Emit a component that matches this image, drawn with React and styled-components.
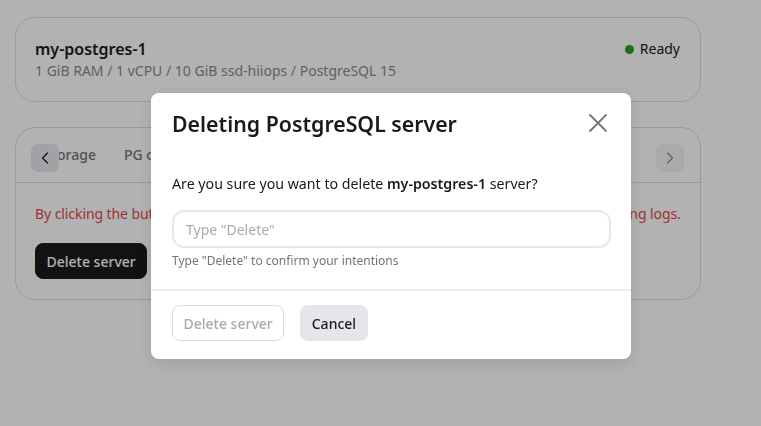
import React from "react";
import styled, { createGlobalStyle } from "styled-components";

const Global = createGlobalStyle`
  * { box-sizing: border-box; }
  html, body { margin: 0; padding: 0; background: #ffffff; }
  body { font-family: "Noto Sans", "Open Sans", sans-serif; color: #1a1a1a; }
`;

const Page = styled.div`
  width: 761px;
  height: 426px;
  padding: 17px 60px 0 15px;
  display: flex;
  flex-direction: column;
  gap: 25px;
  overflow: hidden;
`;

const Card = styled.section`
  border: 1px solid #dedee2;
  border-radius: 20px;
  background: #fff;
  overflow: hidden;
`;

const ServerCard = styled(Card)`
  padding: 20px 20px 20px 19px;
  display: flex;
  justify-content: space-between;
  align-items: flex-start;
`;

const Info = styled.div`
  display: flex;
  flex-direction: column;
  gap: 1px;
`;

const ServerName = styled.div`
  font-size: 16px;
  line-height: 22px;
  font-weight: 600;
  color: #1a1a1a;
`;

const Specs = styled.div`
  font-size: 14px;
  line-height: 20px;
  color: #8a8a92;
`;

const Status = styled.div`
  display: flex;
  align-items: center;
  gap: 6px;
  font-size: 14px;
  line-height: 22px;
  color: #1a1a1a;
`;

const Dot = styled.span`
  width: 9px;
  height: 9px;
  border-radius: 50%;
  background: #23a31f;
`;

const TabsBar = styled.div`
  position: relative;
  height: 55px;
  border-bottom: 1px solid #dedee2;
  display: flex;
  align-items: center;
  padding-left: 28px;
  overflow: hidden;
`;

const Tab = styled.div`
  font-size: 14px;
  line-height: 20px;
  font-weight: 500;
  color: #74747e;
  white-space: nowrap;
  margin-right: 28px;
`;

const ArrowButton = styled.div`
  position: absolute;
  top: 16px;
  ${(p) => (p.$side === "left" ? "left: 15px;" : "right: 16px;")}
  width: 28px;
  height: 28px;
  border-radius: 7px;
  background: ${(p) => (p.$active ? "#e9e9ee" : "#f4f4f7")};
  color: ${(p) => (p.$active ? "#222" : "#8c8c94")};
  display: flex;
  align-items: center;
  justify-content: center;
`;

const CardBody = styled.div`
  padding: 21px 20px 20px 19px;
  display: flex;
  flex-direction: column;
  align-items: flex-start;
  gap: 19px;
`;

const Warning = styled.div`
  font-size: 14px;
  line-height: 20px;
  letter-spacing: -0.08px;
  color: #e24848;
  white-space: nowrap;
`;

const Button = styled.button`
  font-family: inherit;
  font-size: 14px;
  font-weight: 500;
  height: 36px;
  padding: 0 10.5px;
  border-radius: 8px;
  cursor: pointer;
  border: 1px solid ${(p) =>
    p.$variant === "dark" ? "#1a1a1a" : p.$variant === "outline" ? "#dcdce2" : "#e6e5ea"};
  background: ${(p) =>
    p.$variant === "dark" ? "#1a1a1a" : p.$variant === "outline" ? "#ffffff" : "#e6e5ea"};
  color: ${(p) =>
    p.$variant === "dark" ? "#ffffff" : p.$variant === "outline" ? "#a9a9b2" : "#1a1a1a"};
`;

const Overlay = styled.div`
  position: fixed;
  inset: 0;
  background: rgba(0, 0, 0, 0.3);
  display: flex;
  align-items: flex-start;
  padding: 93px 0 0 151px;
`;

const Modal = styled.div`
  width: 480px;
  background: #fff;
  border-radius: 8px;
  box-shadow: 0 4px 16px rgba(0, 0, 0, 0.12);
  display: flex;
  flex-direction: column;
`;

const ModalHeader = styled.div`
  padding: 17px 21px 0 21px;
  display: flex;
  align-items: center;
  justify-content: space-between;
`;

const ModalTitle = styled.h2`
  margin: 0;
  font-size: 21.3px;
  line-height: 28px;
  font-weight: 600;
  color: #1a1a1a;
`;

const CloseButton = styled.div`
  width: 24px;
  height: 24px;
  display: flex;
  align-items: center;
  justify-content: center;
  color: #74747e;
  margin-top: -2px;
`;

const ModalBody = styled.div`
  padding: 36px 20px 20px 21px;
  display: flex;
  flex-direction: column;
`;

const Question = styled.p`
  margin: 0;
  font-size: 14.2px;
  line-height: 20px;
  color: #1a1a1a;
  b { font-weight: 600; }
`;

const Input = styled.input`
  margin-top: 16px;
  height: 38px;
  width: 100%;
  border: 2px solid #e7e7ed;
  border-radius: 12px;
  padding: 0 12px;
  font-family: inherit;
  font-size: 14px;
  outline: none;
  &::placeholder { color: #a9a9b3; }
`;

const Hint = styled.div`
  margin-top: 5px;
  font-size: 12px;
  line-height: 16px;
  color: #74747e;
`;

const Divider = styled.div`
  height: 2px;
  background: #ececf1;
`;

const ModalFooter = styled.div`
  padding: 14px 21px 18px;
  display: flex;
  gap: 16px;
`;

const Chevron = ({ dir }) => (
  <svg width="20" height="20" viewBox="0 0 24 24" fill="none" stroke="currentColor" strokeWidth="1.5" strokeLinecap="round" strokeLinejoin="round">
    {dir === "left" ? <path d="m15 18-6-6 6-6" /> : <path d="m9 18 6-6-6-6" />}
  </svg>
);

const CloseIcon = () => (
  <svg width="24" height="24" viewBox="0 0 24 24" fill="none" stroke="currentColor" strokeWidth="1.8" strokeLinecap="round">
    <path d="M4 4 20 20M20 4 4 20" />
  </svg>
);

export default function App() {
  return (
    <>
      <Global />
      <Page>
        <ServerCard>
          <Info>
            <ServerName>my-postgres-1</ServerName>
            <Specs>1 GiB RAM / 1 vCPU / 10 GiB ssd-hiiops / PostgreSQL 15</Specs>
          </Info>
          <Status>
            <Dot />
            Ready
          </Status>
        </ServerCard>
        <Card>
          <TabsBar>
            <Tab>Storage</Tab>
            <Tab>PG config</Tab>
            <Tab>Users</Tab>
            <Tab>Databases</Tab>
            <Tab>Backups</Tab>
            <Tab>Logs</Tab>
            <Tab>Settings</Tab>
            <ArrowButton $side="left" $active>
              <Chevron dir="left" />
            </ArrowButton>
            <ArrowButton $side="right">
              <Chevron dir="right" />
            </ArrowButton>
          </TabsBar>
          <CardBody>
            <Warning>
              By clicking the button, you will delete the server with all databases, backups and accumulating logs.
            </Warning>
            <Button $variant="dark">Delete server</Button>
          </CardBody>
        </Card>
      </Page>
      <Overlay>
        <Modal>
          <ModalHeader>
            <ModalTitle>Deleting PostgreSQL server</ModalTitle>
            <CloseButton>
              <CloseIcon />
            </CloseButton>
          </ModalHeader>
          <ModalBody>
            <Question>
              Are you sure you want to delete <b>my-postgres-1</b> server?
            </Question>
            <Input placeholder='Type "Delete"' />
            <Hint>Type "Delete" to confirm your intentions</Hint>
          </ModalBody>
          <Divider />
          <ModalFooter>
            <Button $variant="outline">Delete server</Button>
            <Button $variant="soft">Cancel</Button>
          </ModalFooter>
        </Modal>
      </Overlay>
    </>
  );
}
